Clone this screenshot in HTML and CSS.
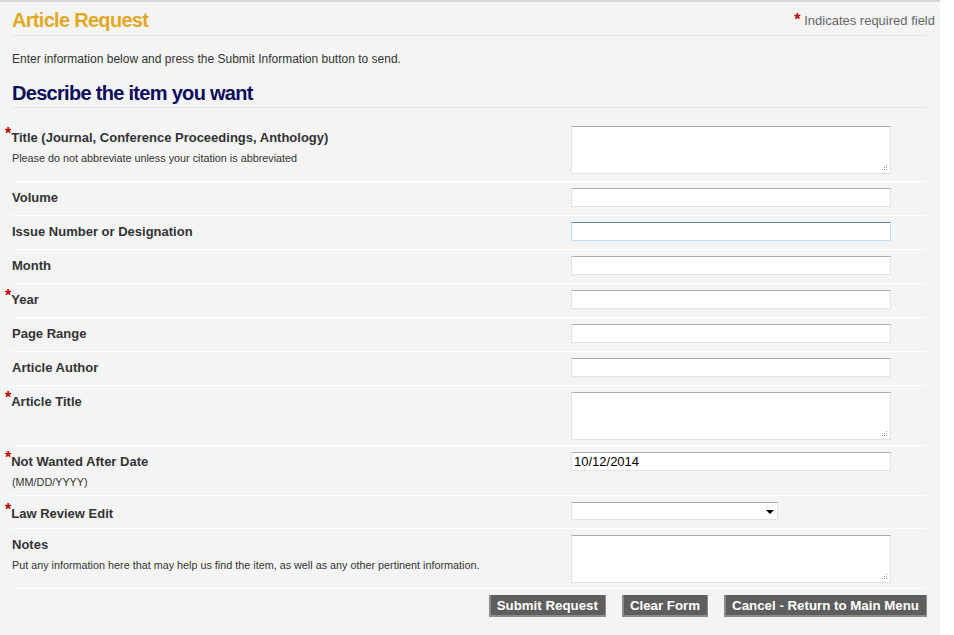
FILE: index.html
```html
<!DOCTYPE html>
<html lang="en">
  <head>
    <meta charset="UTF-8" />
    <meta name="viewport" content="width=device-width, initial-scale=1.0" />
    <title>Article Request</title>
    <link rel="stylesheet" href="styles.css">
  </head>
  <body>
    <div class="page">
      <div class="page-head">
        <h1 class="page-title">Article Request</h1>
        <span class="req-note"><span class="req">*</span> Indicates required field</span>
      </div>
      <p class="intro">Enter information below and press the Submit Information button to send.</p>
      <h2 class="section-title">Describe the item you want</h2>

      <form id="request-form" class="request-form">
        <div class="form-row form-row-first">
          <div class="form-label">
            <label for="title"><span class="req">*</span>Title (Journal, Conference Proceedings, Anthology)</label>
            <span class="hint">Please do not abbreviate unless your citation is abbreviated</span>
          </div>
          <div class="form-field">
            <span class="textarea-wrap"><textarea id="title" class="form-textarea"></textarea></span>
          </div>
        </div>
        <div class="form-row">
          <div class="form-label"><label for="volume">Volume</label></div>
          <div class="form-field"><input type="text" id="volume" class="form-input" /></div>
        </div>
        <div class="form-row">
          <div class="form-label"><label for="issue">Issue Number or Designation</label></div>
          <div class="form-field"><input type="text" id="issue" class="form-input form-input-active" /></div>
        </div>
        <div class="form-row">
          <div class="form-label"><label for="month">Month</label></div>
          <div class="form-field"><input type="text" id="month" class="form-input" /></div>
        </div>
        <div class="form-row">
          <div class="form-label"><label for="year"><span class="req">*</span>Year</label></div>
          <div class="form-field"><input type="text" id="year" class="form-input" /></div>
        </div>
        <div class="form-row">
          <div class="form-label"><label for="pages">Page Range</label></div>
          <div class="form-field"><input type="text" id="pages" class="form-input" /></div>
        </div>
        <div class="form-row">
          <div class="form-label"><label for="author">Article Author</label></div>
          <div class="form-field"><input type="text" id="author" class="form-input" /></div>
        </div>
        <div class="form-row form-row-text">
          <div class="form-label"><label for="article-title"><span class="req">*</span>Article Title</label></div>
          <div class="form-field">
            <span class="textarea-wrap"><textarea id="article-title" class="form-textarea"></textarea></span>
          </div>
        </div>
        <div class="form-row form-row-hint">
          <div class="form-label">
            <label for="not-after"><span class="req">*</span>Not Wanted After Date</label>
            <span class="hint">(MM/DD/YYYY)</span>
          </div>
          <div class="form-field"><input type="text" id="not-after" class="form-input" value="10/12/2014" /></div>
        </div>
        <div class="form-row form-row-select">
          <div class="form-label"><label for="law-review"><span class="req">*</span>Law Review Edit</label></div>
          <div class="form-field">
            <span class="select-wrap">
              <select id="law-review" class="form-select">
                <option></option>
                <option>Yes</option>
                <option>No</option>
              </select>
            </span>
          </div>
        </div>
        <div class="form-row form-row-text">
          <div class="form-label">
            <label for="notes">Notes</label>
            <span class="hint">Put any information here that may help us find the item, as well as any other pertinent information.</span>
          </div>
          <div class="form-field">
            <span class="textarea-wrap"><textarea id="notes" class="form-textarea"></textarea></span>
          </div>
        </div>

        <div class="form-actions">
          <input type="submit" value="Submit Request" class="form-button" />
          <input type="reset" value="Clear Form" class="form-button" />
          <input type="button" value="Cancel - Return to Main Menu" class="form-button" />
        </div>
      </form>
    </div>
  </body>
</html>
```

FILE: styles.css
```css
body {
  margin: 0;
  background: white;
  font-family: "Liberation Sans", Arial, Helvetica, sans-serif;
  color: #333;
}
.page {
  width: 915px;
  padding: 0 13px 20px 12px;
  background: #f4f4f4;
  border-top: 2px solid #d4d4d4;
}
.page-head {
  display: flex;
  justify-content: space-between;
  align-items: center;
  padding: 6px 0 3px;
  border-bottom: 1px solid #e6e6e6;
}
.page-title {
  margin: 0;
  font-size: 20px;
  line-height: 24px;
  color: #e3a823;
  letter-spacing: -0.7px;
}
.req-note {
  margin-right: -8px;
  font-size: 13px;
  color: #666;
}
.req {
  color: #c00000;
  font-size: 16px;
  font-weight: bold;
}
.intro {
  margin: 15px 0 0;
  font-size: 12px;
  line-height: 16px;
}
.section-title {
  margin: 14px 0 0;
  padding-bottom: 2px;
  font-size: 20px;
  line-height: 24px;
  color: #0c0c5c;
  letter-spacing: -0.7px;
  border-bottom: 1px solid #e6e6e6;
}
.form-row {
  display: flex;
  padding: 6px 0 8px;
  border-bottom: 1px solid white;
}
.form-row-first {
  padding: 18px 0 7px;
}
.form-row-first .form-label {
  padding-top: 4px;
}
.form-row-text {
  padding-bottom: 5px;
}
.form-row-hint {
  padding-bottom: 6px;
}
.form-row-select .form-label {
  padding-top: 4px;
}
.form-row-select {
  padding-bottom: 6px;
}
.form-label {
  width: 559px;
  padding-top: 2px;
}
.form-label label {
  display: block;
  font-size: 13px;
  line-height: 16px;
  font-weight: bold;
}
.form-label .req {
  margin-left: -7px;
  line-height: 0;
  vertical-align: 3px;
}
.hint {
  display: block;
  margin-top: 5px;
  font-size: 10.8px;
  line-height: 14px;
}
.form-field {
  flex: 1;
}
.form-input,
.form-textarea,
.form-select {
  display: block;
  box-sizing: border-box;
  margin: 0;
  border: 1px solid #e2e3ea;
  border-top-color: #abadb3;
  background: white;
  font-family: "Liberation Sans", Arial, sans-serif;
  font-size: 13px;
  color: black;
  outline: none;
}
.form-input {
  width: 320px;
  height: 19px;
  padding: 0 2px;
}
.form-input-active {
  border-color: #c5dcee;
  border-top-color: #5f87a8;
}
.textarea-wrap {
  position: relative;
  display: block;
  width: 320px;
}
.form-textarea {
  width: 320px;
  height: 48px;
  resize: none;
}
/* little dotted grip in the bottom corner */
.textarea-wrap::after {
  content: "";
  position: absolute;
  right: 4px;
  bottom: 4px;
  width: 1px;
  height: 1px;
  background: #9a9a9a;
  box-shadow: -2px 0 #9a9a9a, -4px 0 #9a9a9a, 0 -2px #9a9a9a, -2px -2px #9a9a9a, 0 -4px #9a9a9a;
}
.select-wrap {
  position: relative;
  display: block;
  width: 207px;
}
.form-select {
  width: 207px;
  height: 18px;
  padding: 0 2px;
  appearance: none;
  -webkit-appearance: none;
  border-radius: 0;
}
.select-wrap::after {
  content: "";
  position: absolute;
  right: 4px;
  top: 8px;
  border-top: 4px solid black;
  border-left: 4px solid transparent;
  border-right: 4px solid transparent;
}
.form-actions {
  display: flex;
  justify-content: flex-end;
  gap: 16px;
  padding-top: 6px;
}
.form-button {
  height: 22px;
  padding: 0 7px 0 6px;
  background: #5e5e5e;
  color: white;
  font-family: "Liberation Sans", Arial, sans-serif;
  font-size: 13.3px;
  font-weight: bold;
  border: 0;
  border-left: 2px solid #8c8c8c;
  border-bottom: 2px solid #8c8c8c;
  border-right: 1px solid #8c8c8c;
  border-radius: 0;
}
```
